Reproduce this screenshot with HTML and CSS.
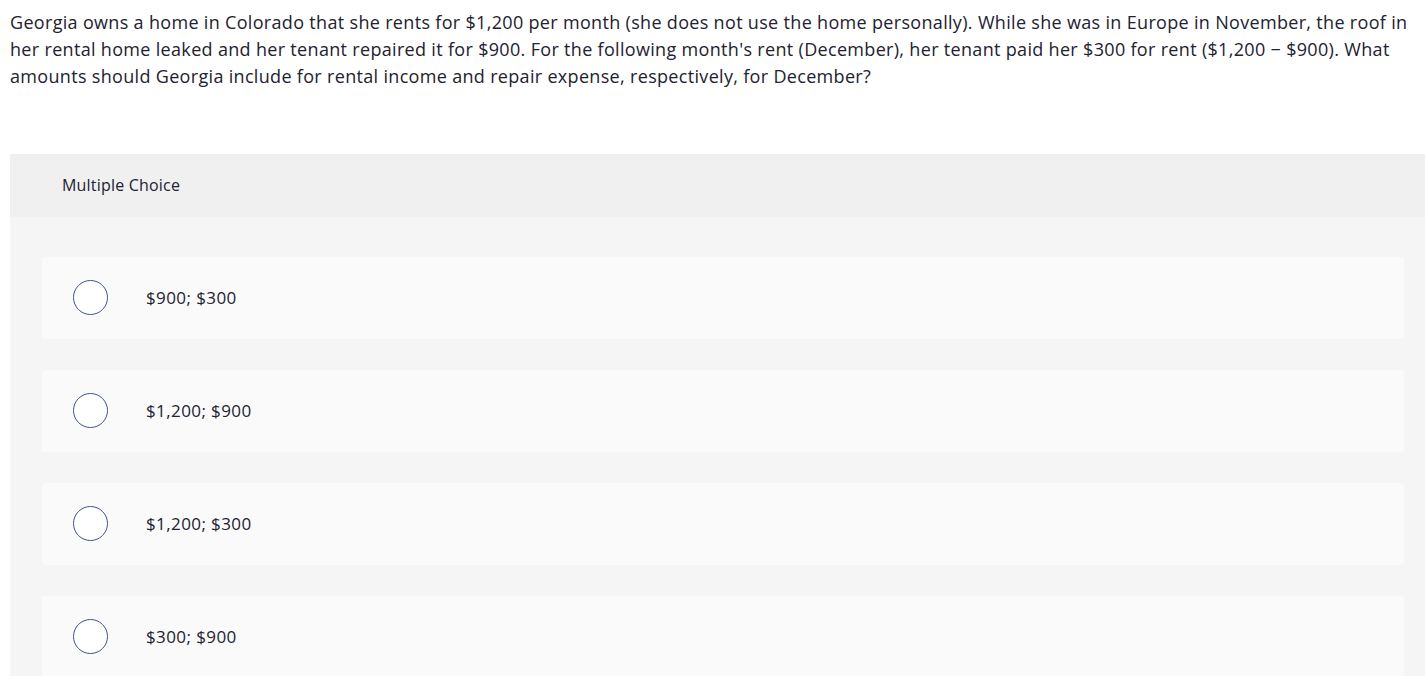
FILE: index.html
```html
<!DOCTYPE html>
<html>
<head>
<meta charset="utf-8">
<link rel="stylesheet" href="styles.css">
</head>
<body>
<p class="question">Georgia owns a home in Colorado that she rents for $1,200 per month (she does not use the home personally). While she was in Europe in November, the roof in her rental home leaked and her tenant repaired it for $900. For the following month's rent (December), her tenant paid her $300 for rent ($1,200 − $900). What amounts should Georgia include for rental income and repair expense, respectively, for December?</p>
<section class="panel">
  <div class="panel-head">Multiple Choice</div>
  <div class="panel-body">
    <label class="option"><span class="radio"></span><span class="opt-text">$900; $300</span></label>
    <label class="option"><span class="radio"></span><span class="opt-text">$1,200; $900</span></label>
    <label class="option"><span class="radio"></span><span class="opt-text">$1,200; $300</span></label>
    <label class="option"><span class="radio"></span><span class="opt-text">$300; $900</span></label>
  </div>
</section>
</body>
</html>
```
FILE: styles.css
```css
html, body {
  margin: 0;
  padding: 0;
  background: #ffffff;
  overflow: hidden;
}
body {
  font-family: "Open Sans", "Lato", sans-serif;
  color: #222230;
  padding-left: 10px;
}
.question {
  margin: 0;
  padding-top: 9px;
  padding-right: 10px;
  font-size: 18px;
  letter-spacing: 0.32px;
  line-height: 27px;
}
.panel {
  margin-top: 64px;
}
.panel-head {
  background: #f0f0f0;
  height: 63px;
  display: flex;
  align-items: center;
  padding-left: 52px;
  padding-bottom: 1px;
  box-sizing: border-box;
  font-size: 16px;
  letter-spacing: 0.2px;
}
.panel-body {
  background: #f5f5f5;
  padding: 40px 21px 40px 32px;
  display: flex;
  flex-direction: column;
  gap: 31px;
}
.option {
  background: #fafafa;
  border-radius: 4px;
  height: 82px;
  display: flex;
  align-items: center;
  padding-left: 31px;
  padding-bottom: 1px;
  box-sizing: border-box;
}
.radio {
  width: 33px;
  height: 33px;
  border: 1.3px solid #3e5686;
  border-radius: 50%;
  background: #fff;
  flex: none;
}
.opt-text {
  margin-left: 38px;
  font-size: 17px;
  letter-spacing: 0.4px;
}
```
